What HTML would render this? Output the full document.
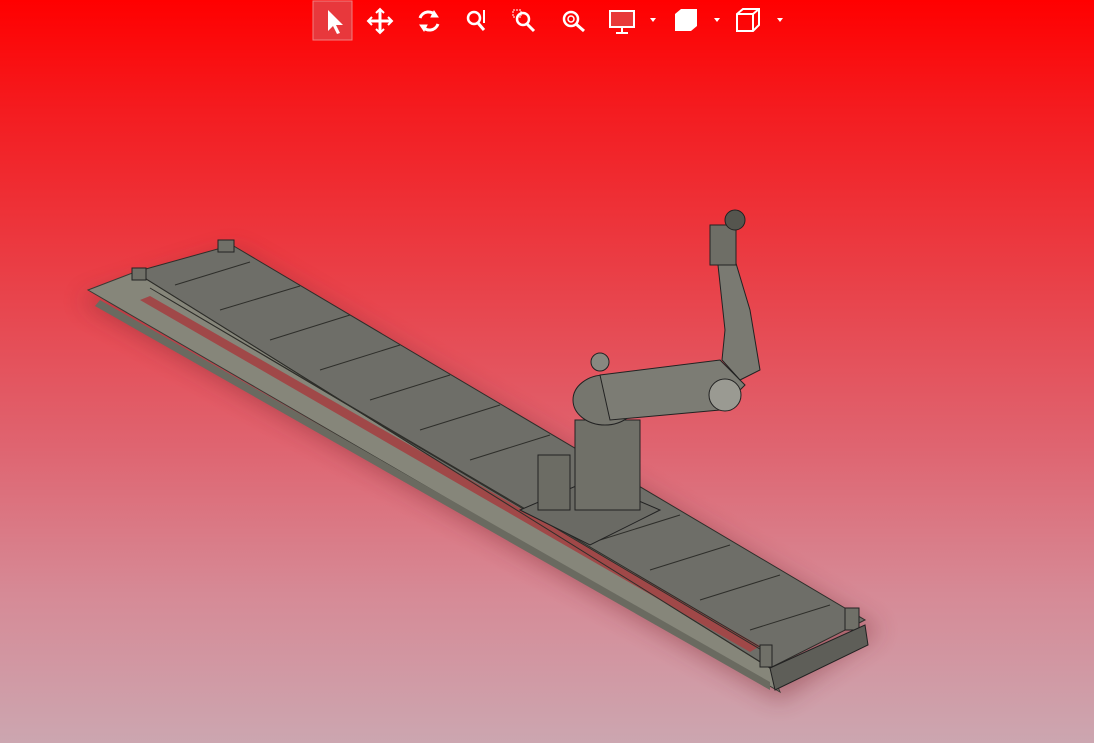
<!DOCTYPE html>
<html><head><style>
html,body{margin:0;padding:0}
body{width:1094px;height:743px;overflow:hidden;background:linear-gradient(to bottom,#ff0000 0%,#f41c20 15%,#e8444c 40%,#df6470 60%,#d68a96 80%,#cca6b0 100%);position:relative;font-family:"Liberation Sans",sans-serif}
.tb{position:absolute;top:0;left:0}
</style></head><body>
<svg width="1094" height="743" style="position:absolute;left:0;top:0">
<defs><filter id="sh" x="-20%" y="-20%" width="140%" height="140%"><feGaussianBlur stdDeviation="12"/></filter></defs>
<!-- shadow -->
<polygon points="80,300 235,250 880,630 780,700" fill="#7a2a30" opacity="0.45" filter="url(#sh)"/>
<!-- side strip -->
<polygon points="88,290 135,272 770,668 780,692" fill="#86867a" stroke="#3a3a34" stroke-width="1"/>
<polygon points="100,300 770,682 770,690 95,306" fill="#6a6a60"/>
<!-- top face -->
<polygon points="135,272 232,245 865,620 770,668" fill="#6e6e68" stroke="#2e2e2a" stroke-width="1"/>
<!-- inner rail slot -->
<polygon points="140,300 150,296 760,646 750,652" fill="#a04848"/>
<g stroke="#2e2e2a" stroke-width="1" fill="none">
<line x1="135" y1="272" x2="770" y2="668"/>
<line x1="150" y1="288" x2="770" y2="655"/>
<line x1="160" y1="294" x2="765" y2="650"/>
<line x1="175" y1="285" x2="250" y2="262"/>
<line x1="220" y1="310" x2="300" y2="286"/>
<line x1="270" y1="340" x2="350" y2="315"/>
<line x1="320" y1="370" x2="400" y2="345"/>
<line x1="370" y1="400" x2="450" y2="375"/>
<line x1="420" y1="430" x2="500" y2="405"/>
<line x1="470" y1="460" x2="550" y2="435"/>
<line x1="600" y1="540" x2="680" y2="515"/>
<line x1="650" y1="570" x2="730" y2="545"/>
<line x1="700" y1="600" x2="780" y2="575"/>
<line x1="750" y1="630" x2="830" y2="605"/>
</g>
<rect x="218" y="240" width="16" height="12" fill="#707068" stroke="#222"/>
<rect x="132" y="268" width="14" height="12" fill="#707068" stroke="#222"/>
<rect x="845" y="608" width="14" height="22" fill="#707068" stroke="#222"/>
<rect x="760" y="645" width="12" height="22" fill="#707068" stroke="#222"/>
<polygon points="770,668 865,625 868,645 775,690" fill="#5e5e58" stroke="#222"/>
<!-- robot base -->
<polygon points="520,510 590,480 660,510 590,545" fill="#6a6a64" stroke="#222"/>
<rect x="575" y="420" width="65" height="90" fill="#707068" stroke="#222"/>
<rect x="538" y="455" width="32" height="55" fill="#6c6c64" stroke="#222"/>
<ellipse cx="605" cy="400" rx="32" ry="25" fill="#76766e" stroke="#222"/>
<polygon points="600,375 720,360 745,385 720,410 610,420" fill="#7c7c74" stroke="#222"/>
<circle cx="725" cy="395" r="16" fill="#9a9a92" stroke="#222"/>
<polygon points="740,380 760,370 750,310 735,260 718,265 725,330 722,360" fill="#7a7a72" stroke="#222"/>
<rect x="710" y="225" width="26" height="40" fill="#6e6e66" stroke="#222"/>
<circle cx="735" cy="220" r="10" fill="#55554e" stroke="#222"/>
<circle cx="600" cy="362" r="9" fill="#888880" stroke="#222"/>
</svg>
<svg class="tb" width="1094" height="45">
<rect x="313" y="1" width="39" height="39" fill="#e8383c" stroke="#f08080"/>
<g fill="#fff" stroke="#fff">
<path d="M328 10 L328 31 L333 26 L337 34 L340 33 L336 25 L343 25 Z" stroke="none"/>
<path d="M380 10 L380 32 M369 21 L391 21" stroke-width="3"/>
<path d="M376 13 L380 9 L384 13 M376 29 L380 33 L384 29 M372 17 L368 21 L372 25 M388 17 L392 21 L388 25" fill="none" stroke-width="2"/>
<path d="M420 18 A9 9 0 0 1 436 16 M438 24 A9 9 0 0 1 422 26" fill="none" stroke-width="3"/>
<path d="M434 11 L438 17 L431 17Z M424 31 L420 25 L427 25Z"/>
<circle cx="474" cy="18" r="6" fill="none" stroke-width="2.5"/><path d="M478 23 L484 30" stroke-width="3"/><path d="M484 10 L484 23" stroke-width="2"/>
<circle cx="523" cy="19" r="6" fill="none" stroke-width="2.5"/><path d="M527 24 L534 31" stroke-width="3"/><rect x="513" y="10" width="8" height="7" fill="none" stroke-dasharray="2 1" stroke-width="1"/>
<circle cx="571" cy="19" r="7" fill="none" stroke-width="2.5"/><circle cx="571" cy="19" r="3" fill="none" stroke-width="1.5"/><path d="M576 24 L584 31" stroke-width="3"/>
<rect x="610" y="11" width="24" height="16" fill="#e83a3a" stroke-width="2"/><path d="M622 28 L622 32 M616 33 L628 33" stroke-width="2"/>
<path d="M650 18 L656 18 L653 22Z M714 18 L720 18 L717 22Z M777 18 L783 18 L780 22Z" stroke="none"/>
<path d="M675 14 L681 9 L697 9 L697 26 L691 31 L675 31 Z" stroke="none"/>
<path d="M737 14 L743 9 L759 9 L759 25 L753 31 L737 31 Z M737 14 L753 14 L753 31 M753 14 L759 9" fill="none" stroke-width="2"/>
</g>
</svg>
</body></html>
